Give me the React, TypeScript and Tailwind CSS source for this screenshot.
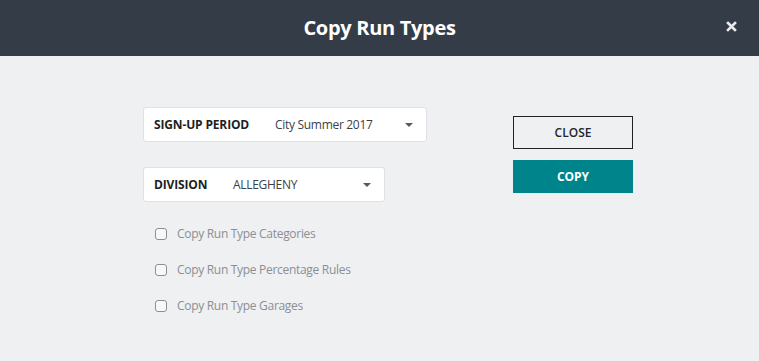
import React from 'react';

function Caret() {
  return (
    <svg width="8" height="4" viewBox="0 0 8 4" className="fill-[#555b61]">
      <path d="M0 0h8L4 4z" />
    </svg>
  );
}

function SelectBox({ label, value, width, valueLeft }: { label: string; value: string; width: string; valueLeft: string }) {
  return (
    <div className={`flex items-center h-[35px] bg-white border border-[#dfe1e4] rounded-[3px] pl-[10px] pr-[13px] ${width}`}>
      <span className={`text-[12px] font-bold text-[#1c1f23] tracking-[-0.15px] ${valueLeft}`}>{label}</span>
      <span className="text-[12px] text-[#3c4046] tracking-[-0.3px] flex-1">{value}</span>
      <Caret />
    </div>
  );
}

function Check({ text }: { text: string }) {
  return (
    <label className="flex items-center h-[12px] gap-[10px]">
      <span className="w-[12px] h-[12px] border border-[#8a8f96] rounded-[3px] bg-[#f7f8f9]" />
      <span className="text-[12px] text-[#8a8f95] tracking-[-0.3px]">{text}</span>
    </label>
  );
}

export default function App() {
  return (
    <div className="w-[759px] h-[361px] bg-[#eff0f2] font-['Open_Sans',sans-serif]">
      <div className="relative h-[56px] bg-[#343d47] flex items-center justify-center">
        <h1 className="text-[20px] font-bold text-white tracking-[-0.3px]">Copy Run Types</h1>
        <button className="absolute right-[22px] top-[21px] text-white">
          <svg width="11" height="11" viewBox="0 0 11 11" className="stroke-[#e9ebed]" strokeWidth="2.6" strokeLinecap="square">
            <path d="M2 2l7 7M9 2l-7 7" />
          </svg>
        </button>
      </div>

      <div className="flex pl-[143px] pt-[51px]">
        <div className="w-[284px]">
          <SelectBox label="SIGN-UP PERIOD" value="City Summer 2017" width="w-[284px]" valueLeft="w-[121px]" />
          <div className="mt-[25px]">
            <SelectBox label="DIVISION" value="ALLEGHENY" width="w-[242px]" valueLeft="w-[79px]" />
          </div>
          <div className="mt-[26px] pl-[12px] flex flex-col gap-[24px]">
            <Check text="Copy Run Type Categories" />
            <Check text="Copy Run Type Percentage Rules" />
            <Check text="Copy Run Type Garages" />
          </div>
        </div>

        <div className="ml-[86px] mt-[9px] w-[120px] flex flex-col gap-[11px]">
          <button className="h-[33px] border border-[#1f2329] text-[12px] font-semibold text-[#22262b]">CLOSE</button>
          <button className="h-[33px] bg-[#00848b] text-[12px] font-bold text-white">COPY</button>
        </div>
      </div>
    </div>
  );
}
